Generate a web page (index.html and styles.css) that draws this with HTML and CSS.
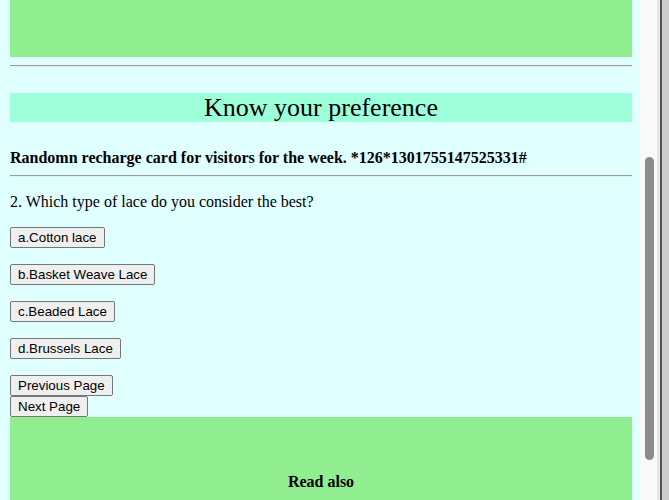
FILE: index.html
```html
<!DOCTYPE html>
<html>
<head>
<meta charset="utf-8">
<title>Know your preference</title>
<link rel="stylesheet" href="styles.css">
</head>
<body>
<div class="window">
  <main class="page">
    <div class="promo-top"></div>
    <hr class="rule">
    <h1 class="band">Know your preference</h1>
    <div class="recharge"><b>Randomn recharge card for visitors for the week. *126*1301755147525331#</b></div>
    <hr class="rule">
    <p class="question">2. Which type of lace do you consider the best?</p>
    <p class="answer"><button class="btn">a.Cotton lace</button></p>
    <p class="answer"><button class="btn">b.Basket Weave Lace</button></p>
    <p class="answer"><button class="btn">c.Beaded Lace</button></p>
    <p class="answer"><button class="btn">d.Brussels Lace</button></p>
    <div class="nav">
      <button class="btn">Previous Page</button><br>
      <button class="btn">Next Page</button>
    </div>
    <div class="promo-bottom">
      <h3 class="read-also">Read also</h3>
    </div>
  </main>
  <div class="scrollbar"><div class="thumb"></div></div>
  <div class="edge"></div>
</div>
</body>
</html>
```
FILE: styles.css
```css
html, body {
  margin: 0;
  padding: 0;
  height: 500px;
  overflow: hidden;
}
body {
  font-family: "Liberation Serif", "Times New Roman", serif;
  font-size: 16px;
  color: #000;
}
.window {
  display: flex;
  height: 500px;
}
.page {
  flex: 0 0 640px;
  box-sizing: border-box;
  padding: 0 8px 0 10px;
  background: #e0ffff;
  overflow: hidden;
  height: 500px;
}
.promo-top {
  height: 57px;
  background: #90ee90;
}
.rule {
  margin: 8px 0;
  border: 0;
  border-top: 1px solid #9a9a9a;
  border-bottom: 1px solid #e4eeee;
  height: 0;
}
.band {
  margin: 26px 0 0;
  background: #9cffd9;
  font-weight: normal;
  font-size: 26px;
  line-height: 29px;
  text-align: center;
}
.recharge {
  margin-top: 27px;
  line-height: 18px;
}
.question {
  margin: 16px 0;
  line-height: 18px;
}
.answer {
  margin: 16px 0;
  line-height: 21px;
  height: 21px;
}
.btn {
  font-family: "Liberation Sans", Arial, sans-serif;
  font-size: 13.33px;
  line-height: 15px;
  color: #000;
  background: #efefef;
  border: 1px solid #767676;
  border-radius: 2px;
  padding: 2px 7px;
  margin: 0;
  vertical-align: top;
}
.nav {
  margin-top: 16px;
  line-height: 0;
}
.promo-bottom {
  background: #90ee90;
  height: 100px;
  padding-top: 55px;
  box-sizing: border-box;
}
.read-also {
  margin: 0;
  text-align: center;
  font-size: 16px;
  line-height: 20px;
}
.scrollbar {
  flex: 0 0 17px;
  background: #f9f9f9;
  padding-top: 157px;
  box-sizing: border-box;
}
.thumb {
  width: 9px;
  height: 303px;
  margin-left: 5px;
  background: #8b8b8b;
  border-radius: 5px;
}
.edge {
  flex: 1;
  background: #cdcdcd;
  border-left: 3px solid #e6e6e6;
  box-shadow: inset 2px 0 0 #555;
}
```
